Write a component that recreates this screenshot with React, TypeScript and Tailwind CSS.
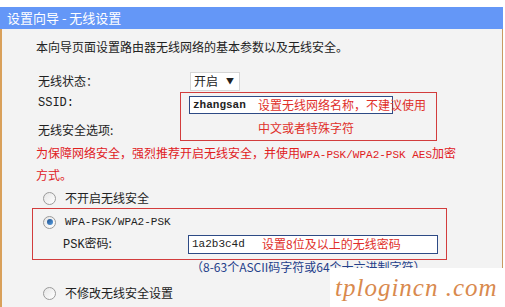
import React from "react";

const cjk = { fontFamily: '"Noto Sans CJK SC", "Noto Sans", sans-serif' };
const mono = { fontFamily: '"Liberation Mono", "Noto Sans CJK SC", monospace' };

function Radio({ checked }: { checked?: boolean }) {
  return (
    <span className="flex h-[13px] w-[13px] items-center justify-center rounded-full border border-[#9a9a9a] bg-gradient-to-br from-[#e6e6e6] to-white">
      {checked && <span className="h-[6px] w-[6px] rounded-full bg-gradient-to-br from-[#1d4f8f] to-[#5aa0e0]" />}
    </span>
  );
}

export default function App() {
  return (
    <div className="relative h-[307px] w-[505px] overflow-hidden bg-white text-[12px] text-[#222]" style={cjk}>
      <div className="ml-0 mt-[7px] w-[503px]">
        <div className="flex h-[22px] items-center bg-[#6497f7] pl-[7px] text-[13px] text-white">
          设置向导 - 无线设置
        </div>
        <div className="h-[278px] border-l-2 border-r border-l-[#d9a05a] border-r-[#c89a62] bg-[#f3f3f3]">
          <div className="h-[8px]" />
          <div className="flex h-[20px] items-center pl-[34px]">本向导页面设置路由器无线网络的基本参数以及无线安全。</div>

          <div className="mt-[14px] flex h-[20px] items-center">
            <div className="w-[188px] pl-[36px]">无线状态：</div>
            <div className="flex h-[19px] w-[50px] items-center justify-between border border-[#d6d6d6] bg-white pl-[3px] pr-[5px]">
              <span>开启</span>
              <span className="text-[8px]">▼</span>
            </div>
          </div>

          <div className="mt-[1px] flex h-[49px]">
            <div className="flex w-[178px] flex-col justify-between pl-[36px]">
              <div className="flex h-[22px] items-center" style={mono}>SSID:</div>
              <div className="flex h-[22px] items-center">无线安全选项:</div>
            </div>
            <div className="h-[49px] w-[257px] border border-[#d23c3c] pl-[8px] pt-[3px]">
              <div className="relative flex h-[18px] w-[204px] items-center border border-[#2d4a85] bg-white pl-[3px] text-[11px] font-semibold" style={mono}>
                zhangsan
                <span className="absolute left-[68px] top-[-1px] whitespace-nowrap text-[12px] font-normal text-[#e0302a]" style={cjk}>
                  设置无线网络名称，不建议使用
                </span>
              </div>
              <div className="mt-[6px] flex h-[16px] items-center pl-[69px] text-[#e0302a]">中文或者特殊字符</div>
            </div>
          </div>

          <div className="mt-[2px] pl-[34px] leading-[19px] text-[#e0201e]">
            为保障网络安全，强烈推荐开启无线安全，并使用<span className="text-[11px]" style={mono}>WPA-PSK/WPA2-PSK AES</span>加密
            <br />
            方式。
          </div>

          <div className="mt-[4px] flex h-[20px] items-center gap-[9px] pl-[41px]">
            <Radio />
            <span>不开启无线安全</span>
          </div>

          <div className="ml-[30px] h-[52px] w-[415px] border border-[#d23c3c] pl-[10px] pt-[3px]">
            <div className="flex h-[20px] items-center gap-[9px]">
              <Radio checked />
              <span className="text-[11px]" style={mono}>WPA-PSK/WPA2-PSK</span>
            </div>
            <div className="mt-[2px] flex h-[20px] items-center pl-[20px]">
              <span className="w-[125px]"><span style={mono}>PSK</span>密码:</span>
              <div className="flex h-[19px] w-[250px] items-center border border-[#2d4a85] bg-white pl-[3px]">
                <span className="w-[70px] text-[11px]" style={mono}>1a2b3c4d</span>
                <span className="text-[#e0302a]">设置8位及以上的无线密码</span>
              </div>
            </div>
          </div>

          <div className="flex h-[14px] items-center whitespace-nowrap pl-[189px] text-[#24408a]">
            （8-63个ASCII码字符或64个十六进制字符）
          </div>

          <div className="mt-[9px] flex h-[20px] items-center gap-[9px] pl-[41px]">
            <Radio />
            <span>不修改无线安全设置</span>
          </div>
        </div>
      </div>

      <div className="absolute bottom-0 right-0 flex h-[39px] w-[175px] items-center bg-white pl-[5px]">
        <span className="whitespace-nowrap text-[25px] italic leading-none tracking-[1px] text-[#d98a4e]" style={{ fontFamily: '"Liberation Serif", serif' }}>
          tplogincn .com
        </span>
      </div>
    </div>
  );
}
